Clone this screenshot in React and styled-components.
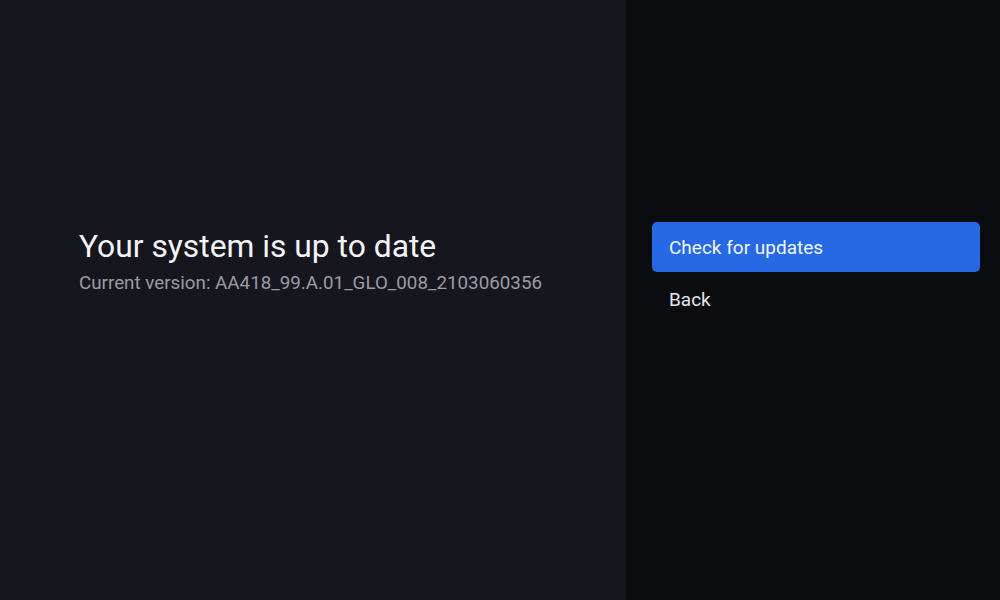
import React from 'react'
import styled, { createGlobalStyle } from 'styled-components'

const GlobalStyle = createGlobalStyle`
  html, body, #root {
    margin: 0;
    padding: 0;
    height: 100%;
  }
  body {
    font-family: Roboto, "Liberation Sans", sans-serif;
    background: #0b0c10;
  }
`

const Root = styled.div`
  display: flex;
  width: 1000px;
  height: 600px;
  overflow: hidden;
`

const InfoPane = styled.div`
  width: 626px;
  background: #16161f;
  display: flex;
  flex-direction: column;
  justify-content: center;
  padding: 0 0 78px 79px;
  box-sizing: border-box;
`

const Title = styled.h1`
  margin: 0;
  font-size: 31.8px;
  font-weight: 400;
  color: #f4f4f6;
  line-height: 38px;
`

const Subtitle = styled.div`
  margin-top: 6px;
  font-size: 18.8px;
  color: #9b9ca3;
  line-height: 24px;
`

const MenuPane = styled.div`
  flex: 1;
  background: #0b0c10;
  padding: 222px 20px 0 26px;
  display: flex;
  flex-direction: column;
`

const MenuItem = styled.div`
  height: 50px;
  display: flex;
  align-items: center;
  padding-left: 17px;
  border-radius: 5px;
  font-size: 19px;
  color: ${p => (p.$focused ? '#f2f5fc' : '#e6e6e8')};
  background: ${p => (p.$focused ? '#2769e4' : 'transparent')};
  & + & {
    height: 54px;
  }
`

export default function App() {
  return (
    <Root>
      <GlobalStyle />
      <InfoPane>
        <Title>Your system is up to date</Title>
        <Subtitle>Current version: AA418_99.A.01_GLO_008_2103060356</Subtitle>
      </InfoPane>
      <MenuPane>
        <MenuItem $focused>Check for updates</MenuItem>
        <MenuItem>Back</MenuItem>
      </MenuPane>
    </Root>
  )
}
